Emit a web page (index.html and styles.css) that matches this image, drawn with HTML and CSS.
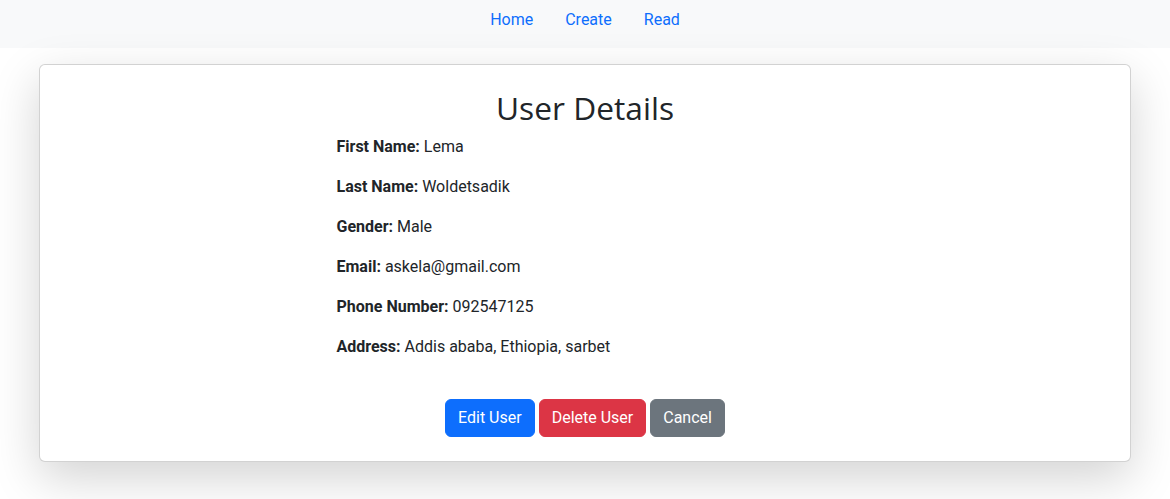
FILE: index.html
```html
<!DOCTYPE html>
<html lang="en">
<head>
<meta charset="utf-8">
<title>User Details</title>
<link rel="stylesheet" href="styles.css">
</head>
<body>
<nav class="navbar">
  <ul class="nav">
    <li><a class="nav-link" href="#">Home</a></li>
    <li><a class="nav-link" href="#">Create</a></li>
    <li><a class="nav-link" href="#">Read</a></li>
  </ul>
</nav>
<main class="container">
  <div class="card">
    <h2 class="title">User Details</h2>
    <div class="details">
      <p><strong>First Name:</strong> Lema</p>
      <p><strong>Last Name:</strong> Woldetsadik</p>
      <p><strong>Gender:</strong> Male</p>
      <p><strong>Email:</strong> askela@gmail.com</p>
      <p><strong>Phone Number:</strong> 092547125</p>
      <p><strong>Address:</strong> Addis ababa, Ethiopia, sarbet</p>
    </div>
    <div class="actions">
      <button class="btn btn-primary">Edit User</button>
      <button class="btn btn-danger">Delete User</button>
      <button class="btn btn-secondary">Cancel</button>
    </div>
  </div>
</main>
</body>
</html>
```
FILE: styles.css
```css
* { box-sizing: border-box; }
html { background: #fff; }
body {
  margin: 0;
  min-height: 100vh;
  font-family: Roboto, "Open Sans", sans-serif;
  font-size: 16px;
  line-height: 24px;
  color: #212529;
  background: #fff;
}
.navbar {
  background: #f8f9fa;
  height: 48px;
  padding-top: 8px;
}
.nav {
  list-style: none;
  margin: 0;
  padding: 0;
  display: flex;
  justify-content: center;
}
.nav-link {
  display: block;
  padding: 0 16px;
  color: #0d6efd;
  text-decoration: none;
}
.container {
  width: 1092px;
  margin: 16px auto 0;
  padding-bottom: 48px;
}
.card {
  background: #fff;
  border: 1px solid rgba(0, 0, 0, 0.175);
  border-radius: 6px;
  box-shadow: 0 16px 48px rgba(0, 0, 0, 0.175);
  padding: 24px;
  display: flex;
  flex-direction: column;
}
.title {
  margin: 0 0 8px;
  text-align: center;
  font-family: "Open Sans", Roboto, sans-serif;
  font-size: 31.7px;
  font-weight: 500;
  line-height: 38px;
}
.details {
  width: 50%;
  margin-left: 25%;
  padding: 0 12px;
}
.details p {
  margin: 0 0 16px;
}
.details strong { font-weight: 700; }
.actions {
  margin-top: 24px;
  display: flex;
  justify-content: center;
  gap: 4px;
}
.btn {
  font-family: inherit;
  font-size: 16px;
  line-height: 24px;
  padding: 6px 12px;
  border: 1px solid transparent;
  border-radius: 6px;
  color: #fff;
  cursor: pointer;
}
.btn-primary { background: #0d6efd; border-color: #0d6efd; }
.btn-danger { background: #dc3545; border-color: #dc3545; }
.btn-secondary { background: #6c757d; border-color: #6c757d; }
```
